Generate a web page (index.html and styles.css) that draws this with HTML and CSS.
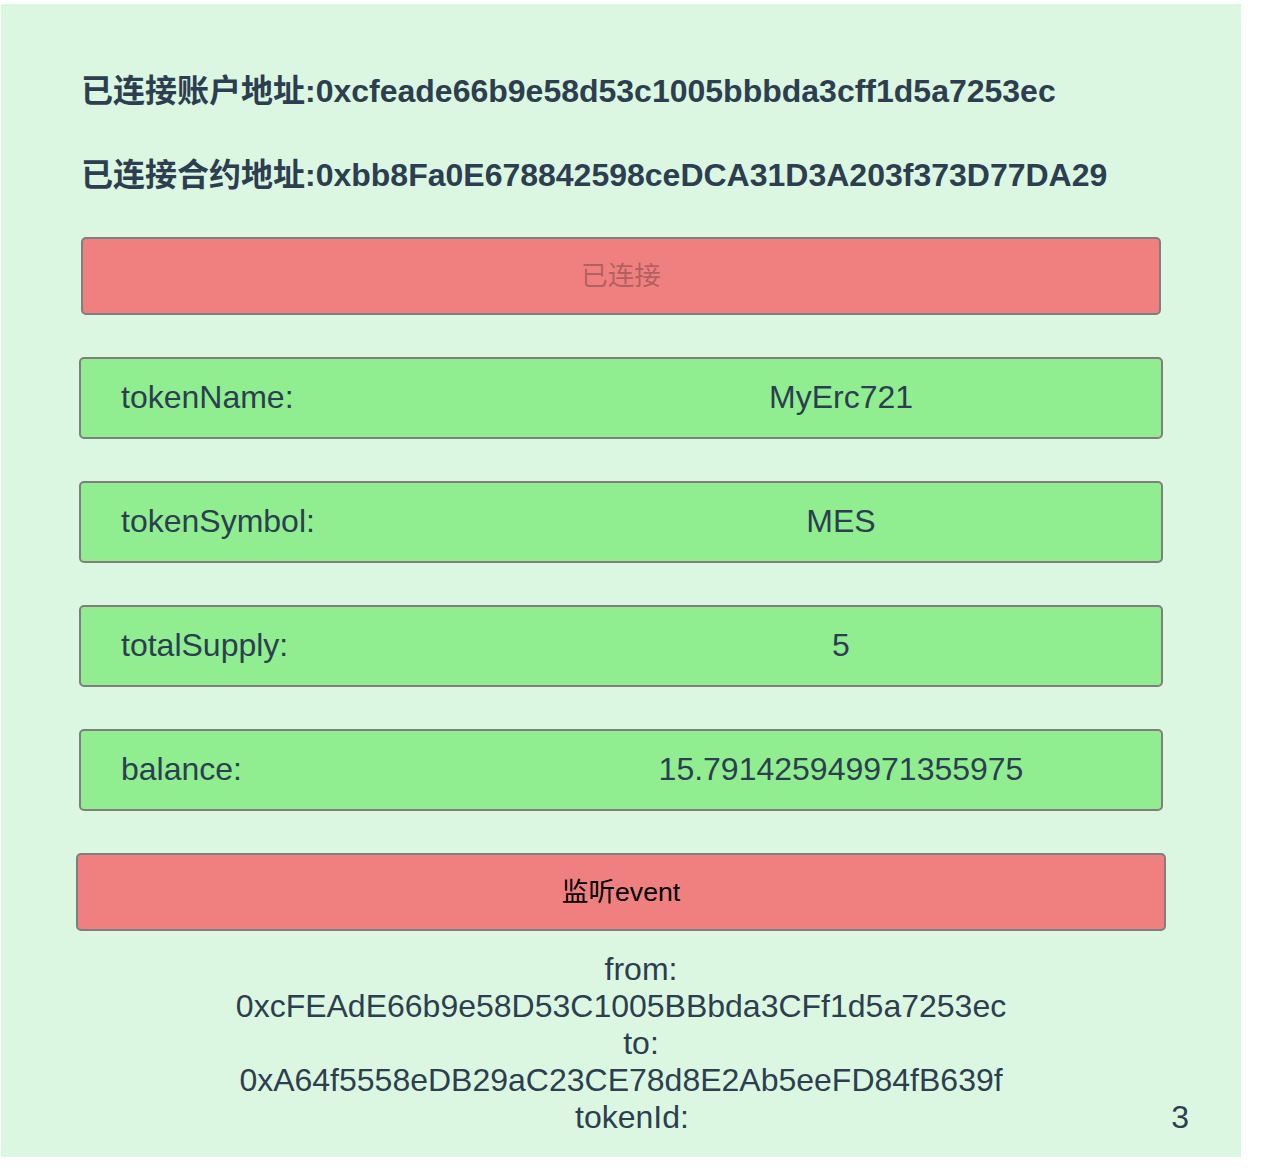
FILE: index.html
```html
<!DOCTYPE html>
<html lang="zh-CN">
<head>
<meta charset="utf-8">
<title>MyErc721</title>
<link rel="stylesheet" href="styles.css">
</head>
<body>
<div class="panel">
  <h2 class="addr-line">已连接账户地址:0xcfeade66b9e58d53c1005bbbda3cff1d5a7253ec</h2>
  <h2 class="addr-line">已连接合约地址:0xbb8Fa0E678842598ceDCA31D3A203f373D77DA29</h2>
  <button class="btn btn-connect" disabled>已连接</button>
  <div class="info-row"><span class="info-label">tokenName:</span><span class="info-value">MyErc721</span></div>
  <div class="info-row"><span class="info-label">tokenSymbol:</span><span class="info-value">MES</span></div>
  <div class="info-row"><span class="info-label">totalSupply:</span><span class="info-value">5</span></div>
  <div class="info-row"><span class="info-label">balance:</span><span class="info-value">15.791425949971355975</span></div>
  <button class="btn btn-listen">监听event</button>
  <div class="events">
    <div class="ev-label">from:</div>
    <div class="ev-value">0xcFEAdE66b9e58D53C1005BBbda3CFf1d5a7253ec</div>
    <div class="ev-label">to:</div>
    <div class="ev-value">0xA64f5558eDB29aC23CE78d8E2Ab5eeFD84fB639f</div>
    <div class="ev-token"><span>tokenId:</span><span>3</span></div>
  </div>
</div>
</body>
</html>
```
FILE: styles.css
```css
html, body {
  margin: 0;
  padding: 0;
  background: #ffffff;
}

body {
  font-family: "Liberation Sans", Arial, "Noto Sans CJK SC", sans-serif;
  color: #2c3e50;
}

.panel {
  width: 1240px;
  margin: 4px 0 0 1px;
  padding: 69px 0 21px;
  background: #dcf7e1;
  display: flex;
  flex-direction: column;
}

.addr-line {
  margin: 0 80px;
  font-size: 32px;
  line-height: 37px;
  font-weight: 700;
  white-space: nowrap;
}

.addr-line + .addr-line {
  margin-top: 47px;
}

.btn {
  box-sizing: border-box;
  height: 78px;
  padding: 0;
  background: #f08080;
  border: 2px solid #7f7f7f;
  border-radius: 5px;
  font-family: "Liberation Sans", Arial, "Noto Sans CJK SC", sans-serif;
  font-size: 26.67px;
  line-height: 31px;
  color: #000000;
}

.btn:disabled {
  color: rgba(16, 16, 16, 0.3);
}

.btn-connect {
  margin: 43px 80px 0;
}

.btn-listen {
  margin: 42px 75px 0;
}

.info-row {
  margin: 42px 78px 0;
  padding: 20px 40px 21px;
  background: #90ee90;
  border: 2px solid #7f7f7f;
  border-radius: 5px;
  display: grid;
  grid-template-columns: 440px 1fr;
  font-size: 32px;
  line-height: 37px;
}

.info-value {
  text-align: center;
}

.events {
  margin-top: 20px;
  font-size: 32px;
  line-height: 37px;
  text-align: center;
}

.ev-label {
  padding-left: 40px;
}

.ev-token {
  display: flex;
  justify-content: space-between;
  padding: 0 52px 0 574px;
}
```
